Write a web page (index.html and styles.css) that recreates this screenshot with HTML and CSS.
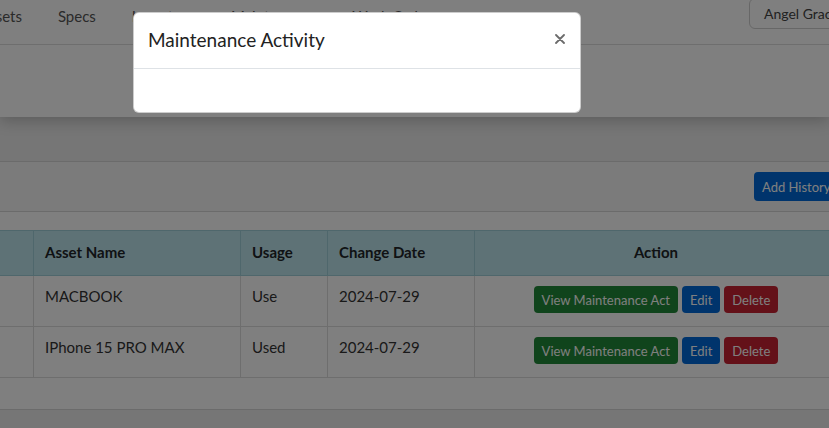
FILE: index.html
```html
<!DOCTYPE html>
<html lang="en">
<head>
<meta charset="utf-8">
<title>Asset History</title>
<link rel="stylesheet" href="styles.css">
</head>
<body>
<header class="topbar">
  <nav class="nav">
    <ul class="nav-links">
      <li class="nav-item first">Assets</li>
      <li class="nav-item">Specs</li>
      <li class="nav-item">Inventory</li>
      <li class="nav-item">Maintenance</li>
      <li class="nav-item">Work Orders</li>
    </ul>
    <button class="user-btn">Angel Grace</button>
  </nav>
  <div class="subbar"></div>
</header>

<main class="main">
  <section class="card">
    <div class="card-header">
      <button class="btn btn-primary btn-add">Add History</button>
    </div>
    <div class="card-body">
      <table class="table">
        <thead>
          <tr>
            <th class="col-no"></th>
            <th class="col-name">Asset Name</th>
            <th class="col-usage">Usage</th>
            <th class="col-date">Change Date</th>
            <th class="col-action">Action</th>
          </tr>
        </thead>
        <tbody>
          <tr>
            <td class="col-no"></td>
            <td>MACBOOK</td>
            <td>Use</td>
            <td>2024-07-29</td>
            <td class="col-action">
              <div class="actions">
                <button class="btn btn-success">View Maintenance Act</button>
                <button class="btn btn-primary">Edit</button>
                <button class="btn btn-danger">Delete</button>
              </div>
            </td>
          </tr>
          <tr>
            <td class="col-no"></td>
            <td>IPhone 15 PRO MAX</td>
            <td>Used</td>
            <td>2024-07-29</td>
            <td class="col-action">
              <div class="actions">
                <button class="btn btn-success">View Maintenance Act</button>
                <button class="btn btn-primary">Edit</button>
                <button class="btn btn-danger">Delete</button>
              </div>
            </td>
          </tr>
        </tbody>
      </table>
    </div>
  </section>
</main>

<div class="backdrop"></div>
<div class="modal" role="dialog">
  <div class="modal-header">
    <h5 class="modal-title">Maintenance Activity</h5>
    <button class="modal-close" aria-label="Close">
      <svg width="10" height="10" viewBox="0 0 10 10"><path d="M1 1L9 9M9 1L1 9" stroke="#6b6b6b" stroke-width="1.8" stroke-linecap="round"/></svg>
    </button>
  </div>
  <div class="modal-body"></div>
</div>
</body>
</html>
```

FILE: styles.css
```css
* { box-sizing: border-box; }
html, body { margin: 0; padding: 0; }
body {
  font-family: "Lato", "Noto Sans", sans-serif;
  background: #ececec;
  color: #212529;
  width: 829px;
  height: 428px;
  overflow: hidden;
  position: relative;
}

.topbar {
  background: #fff;
  box-shadow: 0 4px 14px rgba(0,0,0,0.22);
  position: relative;
  z-index: 1;
}
.nav {
  height: 45px;
  border-bottom: 1px solid #dcdcdc;
  display: flex;
  align-items: flex-start;
  justify-content: space-between;
}
.nav-links {
  list-style: none;
  margin: 0 0 0 -21px;
  padding: 0;
  display: flex;
  gap: 36px;
  font-size: 15px;
  color: #555;
  line-height: 1;
  padding-top: 9px;
}
.nav-item { white-space: nowrap; }
.user-btn {
  margin-top: -2px;
  margin-right: -40px;
  height: 31px;
  padding: 0 14px;
  border: 1px solid #cfcfcf;
  border-radius: 6px;
  background: #fff;
  font-family: inherit;
  font-size: 14px;
  color: #444;
  width: 120px;
  text-align: left;
}
.subbar { height: 72px; }

.main { padding-top: 44px; }
.card {
  background: #fff;
  border-top: 1px solid #d6d6d6;
  border-bottom: 1px solid #d6d6d6;
}
.card-header {
  height: 50px;
  background: #f6f6f6;
  border-bottom: 1px solid #d6d6d6;
  display: flex;
  justify-content: flex-end;
  align-items: center;
}
.btn {
  font-family: inherit;
  border: 0;
  border-radius: 4px;
  color: #fff;
  cursor: pointer;
  white-space: nowrap;
}
.btn-primary { background: #0069d9; }
.btn-success { background: #218838; }
.btn-danger { background: #c82333; }
.btn-add {
  height: 29px;
  font-size: 13px;
  padding: 0 8px;
  margin-right: -14px;
  width: 89px;
  text-align: left;
}

.card-body { padding: 18px 0 31px 0; }
.table {
  border-collapse: collapse;
  margin-left: -1px;
  width: 839px;
  font-size: 15px;
}
.table th, .table td {
  border: 1px solid #dcdcdc;
  text-align: left;
  padding: 0 11px;
}
.table thead th {
  background: #bde4ec;
  border-color: #9ecfd9;
  height: 45px;
  font-weight: 700;
  border-top: 1px solid #9ecfd9;
  padding-bottom: 2px;
}
.table tbody td {
  height: 51px;
  vertical-align: top;
  padding-top: 11px;
  color: #333;
}
.col-no { width: 34px; }
.col-name { width: 207px; }
.col-usage { width: 87px; }
.col-date { width: 147px; }
.table th.col-action { text-align: center; }
.table td.col-action { padding-top: 10px; }
.actions {
  display: flex;
  justify-content: center;
  gap: 4px;
}
.actions .btn {
  height: 27px;
  font-size: 13px;
  padding: 0 8px;
}

.backdrop {
  position: absolute;
  inset: 0;
  background: rgba(0,0,0,0.5);
  z-index: 10;
}
.modal {
  position: absolute;
  left: 133px;
  top: 12px;
  width: 448px;
  background: #fff;
  border-radius: 6px;
  z-index: 11;
  border: 1px solid rgba(0,0,0,0.2);
}
.modal-header {
  height: 56px;
  border-bottom: 1px solid #dee2e6;
  display: flex;
  align-items: center;
  justify-content: space-between;
  padding: 0 11px 3px 14px;
}
.modal-title {
  margin: 0;
  font-size: 19px;
  font-weight: 400;
  color: #222;
}
.modal-close {
  border: 0;
  background: transparent;
  padding: 4px;
  display: flex;
  margin-top: -1px;
}
.modal-body { height: 43px; }
```
